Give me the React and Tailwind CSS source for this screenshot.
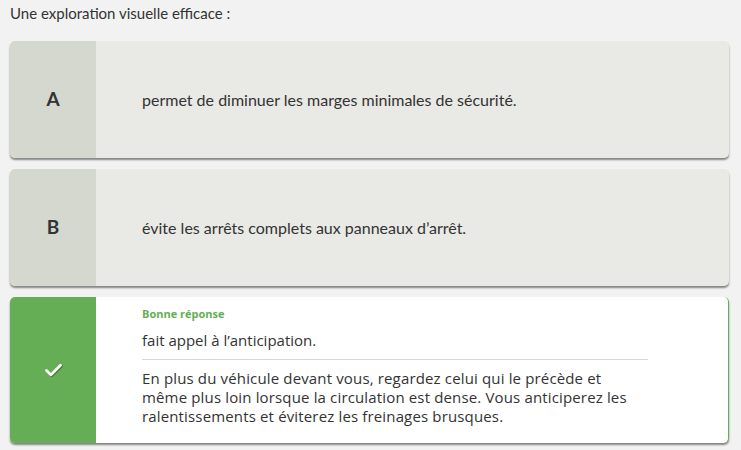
import { Check } from 'lucide-react'

const OPTIONS = [
  { letter: 'A', text: 'permet de diminuer les marges minimales de sécurité.' },
  { letter: 'B', text: 'évite les arrêts complets aux panneaux d’arrêt.' },
]

const lato = { fontFamily: 'Lato, "Noto Sans", sans-serif' }

export default function App() {
  return (
    <div className="min-h-[450px] bg-[#f2f2f2] px-[10px] pt-[3px]" style={lato}>
      <p className="text-[15px] leading-[20px] text-[#333]">Une exploration visuelle efficace :</p>

      <div className="mt-[18px] flex flex-col gap-[11px] w-[719px]">
        {OPTIONS.map((o) => (
          <div
            key={o.letter}
            className="flex h-[117px] rounded-[5px] overflow-hidden bg-[#e9eae6] shadow-[0_2px_2px_rgba(0,0,0,0.45)]"
          >
            <div className="w-[86px] shrink-0 bg-[#d5d8cf] flex items-center justify-center text-[19px] font-bold text-[#333]">
              {o.letter}
            </div>
            <div className="flex items-center pl-[46px] text-[16px] text-[#333]">{o.text}</div>
          </div>
        ))}

        <div className="flex h-[146px] rounded-[5px] overflow-hidden bg-white border-r border-[#65ae55] shadow-[0_2px_2px_rgba(0,0,0,0.45)]">
          <div className="w-[86px] shrink-0 bg-[#65ae55] flex items-center justify-center">
            <Check className="w-[21px] h-[21px] text-white drop-shadow-[1px_1px_0_rgba(0,0,0,0.3)]" strokeWidth={3.2} />
          </div>
          <div className="pl-[46px] pt-[10px]" style={{ fontFamily: '"Open Sans", "Noto Sans", sans-serif' }}>
            <p className="text-[11px] leading-[14px] font-bold text-[#65ae55]">Bonne réponse</p>
            <p className="mt-[10px] text-[15px] leading-[19px] text-[#333]">fait appel à l’anticipation.</p>
            <div className="mt-[9px] w-[506px] border-t border-[#d5d8cf]" />
            <p className="mt-[9px] text-[15px] leading-[19px] text-[#333] tracking-[0.15px]">
              En plus du véhicule devant vous, regardez celui qui le précède et
              <br />
              même plus loin lorsque la circulation est dense. Vous anticiperez les
              <br />
              ralentissements et éviterez les freinages brusques.
            </p>
          </div>
        </div>
      </div>
    </div>
  )
}
